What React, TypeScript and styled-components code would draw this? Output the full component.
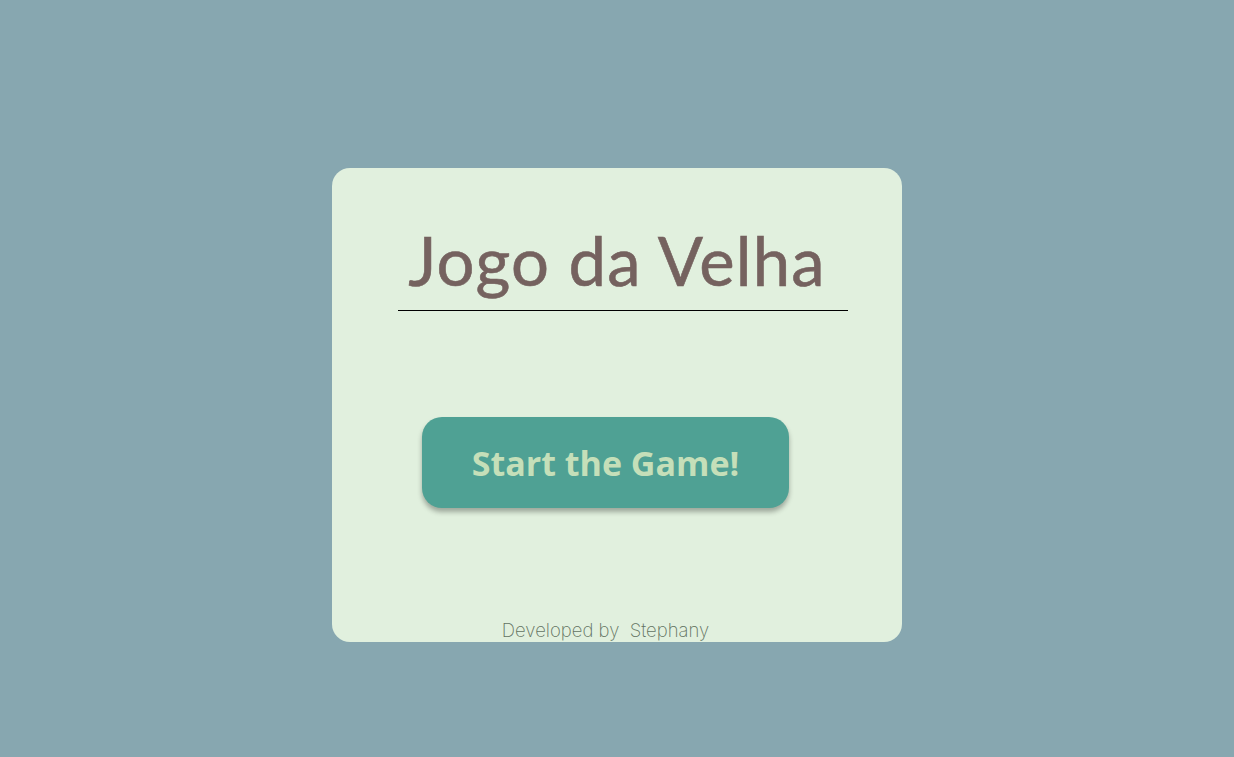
import React from "react";
import styled, {createGlobalStyle} from "styled-components";

const GlobalStyle = createGlobalStyle`
  * {
    box-sizing: border-box;
  }

  body {
    margin: 0;
    background: #87a7b0;
    font-family: "Open Sans", sans-serif;
  }
`

const App: React.FC = () => {
    return (
        <>
            <GlobalStyle />
            <Page>
                <Card>
                    <TitleBox>
                        <Title>Jogo da Velha</Title>
                    </TitleBox>

                    <StartButton>Start the Game!</StartButton>

                    <Footer>Developed by&nbsp; Stephany</Footer>
                </Card>
            </Page>
        </>
    );
}

const Page = styled.div`
  width: 100%;
  height: 757px;
  display: flex;
  justify-content: center;
  padding-top: 168px;
`

const Card = styled.div`
  width: 570px;
  height: 474px;
  background: #e1f0de;
  border-radius: 18px;
  display: flex;
  flex-direction: column;
  align-items: center;
`

const TitleBox = styled.div`
  width: 450px;
  margin-top: 50px;
  margin-left: 12px;
  padding-right: 12px;
  border-bottom: 1px solid #000;
  text-align: center;
`

const Title = styled.h1`
  margin: 0;
  padding-bottom: 8px;
  font-family: "Lato", sans-serif;
  font-size: 67px;
  font-weight: 400;
  line-height: 84px;
  letter-spacing: 1.2px;
  white-space: nowrap;
  color: #75625f;
  -webkit-text-stroke: 0.6px #75625f;
`

const StartButton = styled.button`
  width: 367px;
  height: 91px;
  margin-top: 106px;
  margin-right: 23px;
  border: none;
  border-radius: 20px;
  background: #4fa194;
  color: #c5dfb9;
  font-family: "Open Sans", sans-serif;
  font-size: 34px;
  font-weight: 700;
  box-shadow: 0 4px 5px rgba(0, 0, 0, 0.3);
  cursor: pointer;
`

const Footer = styled.p`
  margin: auto 23px 0 0;
  font-family: "Inter", sans-serif;
  font-size: 18.5px;
  font-weight: 200;
  line-height: 24px;
  color: #617261;
`

export default App;
